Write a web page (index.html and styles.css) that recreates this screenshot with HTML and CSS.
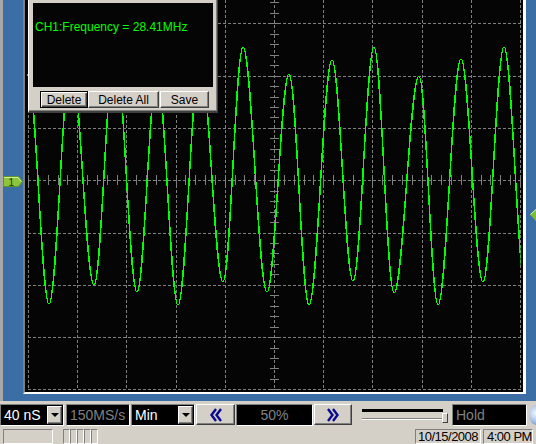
FILE: index.html
```html
<!DOCTYPE html>
<html lang="en">
<head>
  <meta charset="UTF-8">
  <title>Scope - CH1 Frequency</title>
  <link rel="stylesheet" href="styles.css">
</head>
<body>
  <div class="desk">
    <div class="scope">
      <svg class="screen" width="498" height="392" viewBox="25 0 498 392">
        <defs>
          <clipPath id="traceArea"><rect x="27" y="0" width="493.5" height="392"/></clipPath>
        </defs>
        <path id="grid" class="grid"/>
        <path id="ticks" class="ticks"/>
        <path id="wave" class="wave" clip-path="url(#traceArea)"/>
      </svg>
    </div>

    <!-- channel 1 level marker -->
    <svg class="chMarker" width="20" height="11" viewBox="0 0 20 11">
      <polygon points="0.5,0.5 15.5,0.5 19.5,5.5 15.5,10.5 0.5,10.5" fill="#8cc43c" stroke="#5f9424"/>
      <polyline points="1.5,1.5 15,1.5 18.3,5.5" fill="none" stroke="#d2f0a4"/>
      <text x="5.5" y="9.5" class="chLabel">1</text>
    </svg>

    <!-- trigger level marker -->
    <svg class="trigMarker" width="6" height="12" viewBox="0 0 6 12">
      <polygon points="0,5.5 6,0 6,12" fill="#7cbc30"/>
      <polyline points="0.5,5.5 6,0.5" fill="none" stroke="#d8f4a8"/>
    </svg>

    <!-- measurement window -->
    <div class="measure">
      <div class="readout">CH1:Frequency = 28.41MHz</div>
      <div class="measureButtons">
        <button class="winBtn focused btnDelete">Delete</button>
        <button class="winBtn btnDeleteAll">Delete All</button>
        <button class="winBtn btnSave">Save</button>
      </div>
    </div>
  </div>

  <div class="toolbar">
    <div class="field combo timebase">40 nS<span class="drop"></span></div>
    <div class="field rate">150MS/s</div>
    <div class="field combo mode">Min<span class="drop"></span></div>
    <div class="tbBtn">
      <svg width="12" height="14" viewBox="0 0 12 14"><path d="M6 1L1.5 7L6 13M11 1L6.5 7L11 13" class="chevron"/></svg>
    </div>
    <div class="field pos">50%</div>
    <div class="tbBtn next">
      <svg width="12" height="14" viewBox="0 0 12 14"><path d="M1 1L5.5 7L1 13M6 1L10.5 7L6 13" class="chevron"/></svg>
    </div>
    <div class="slider">
      <div class="range"></div>
      <div class="track"><span class="thumb"></span></div>
    </div>
    <div class="field hold">Hold</div>
    <div class="orb"></div>
  </div>

  <div class="statusbar">
    <div class="pane wide"></div>
    <div class="pane tiny first"></div>
    <div class="pane tiny"></div>
    <div class="pane tiny"></div>
    <div class="pane tiny"></div>
    <div class="pane tiny"></div>
    <div class="spacer"></div>
    <div class="pane date">10/15/2008</div>
    <div class="pane time">4:00 PM</div>
  </div>

  <script>
    // graticule: 10 x 8 divisions, top row is scrolled off the window
    const grid = [];
    for (let i = 0; i <= 10; i++) {
      const x = Math.round(28 + 49.2 * i) + 0.5;
      grid.push(`M${x} 0V390`);
    }
    for (let j = 0; j <= 7; j++) {
      const y = Math.round(23.3 + 52.3 * j) + 0.5;
      grid.push(`M28 ${y}H521`);
    }
    document.getElementById('grid').setAttribute('d', grid.join(''));

    // minor ticks on the centre axes
    const ticks = [];
    for (let k = -18; k <= 21; k++) {
      const y = Math.round(180.2 + 10.46 * k) + 0.5;
      if (y > 0 && y < 390) ticks.push(`M270 ${y}H279`);
    }
    for (let k = 0; k <= 50; k++) {
      const x = Math.round(28 + 9.84 * k) + 0.5;
      ticks.push(`M${x} 175V185`);
    }
    document.getElementById('ticks').setAttribute('d', ticks.join(''));

    // peaks and troughs of the captured trace
    const pts = [
      [6, 292], [28, 75], [49, 304], [71, 60], [94, 285], [115, 47], [137, 292], [157, 75],
      [178, 305], [200, 60], [223, 282], [243, 47], [267, 292], [289, 74], [309, 305], [332, 60],
      [353, 281], [374, 47], [394, 293], [419, 76], [438, 305], [461, 59], [483, 282], [504, 47], [526, 292]
    ];
    const k = 0.3642;
    let d = `M${pts[0][0]} ${pts[0][1]}`;
    for (let i = 1; i < pts.length; i++) {
      const [x0, y0] = pts[i - 1];
      const [x1, y1] = pts[i];
      const dx = (x1 - x0) * k;
      d += `C${(x0 + dx).toFixed(1)} ${y0} ${(x1 - dx).toFixed(1)} ${y1} ${x1} ${y1}`;
    }
    document.getElementById('wave').setAttribute('d', d);
  </script>
</body>
</html>
```

FILE: styles.css
```css
body {
  margin: 0;
  width: 536px;
  height: 444px;
  overflow: hidden;
  background: #d4d0c8;
  font-family: "Liberation Sans", Arial, sans-serif;
}

/* blue client area holding the scope screen */
.desk {
  position: relative;
  display: flex;
  height: 401px;
  background: #3a6ea5;
  border-left: 3px solid #a8a8a8;
  box-sizing: border-box;
}

.scope {
  margin-left: 20px;
  width: 498px;
  height: 392px;
  background: #050505;
  border-left: 2px solid #808080;
  border-right: 3px solid #fff;
  border-bottom: 2px solid #fff;
}

.screen {
  display: block;
}

.grid {
  fill: none;
  stroke: #808080;
  stroke-dasharray: 3 2;
  shape-rendering: crispEdges;
}

.ticks {
  fill: none;
  stroke: #808080;
  shape-rendering: crispEdges;
}

.wave {
  fill: none;
  stroke: #00ff00;
  stroke-width: 1.5;
  shape-rendering: crispEdges;
}

.chMarker {
  position: absolute;
  left: 0;
  top: 176px;
}

.chLabel {
  font-family: "Liberation Sans", Arial, sans-serif;
  font-size: 10px;
  fill: #1c3300;
}

.trigMarker {
  position: absolute;
  left: 527px;
  top: 209px;
}

/* measurement popup */
.measure {
  position: absolute;
  left: 25px;
  top: 0;
  width: 180px;
  padding: 3px 4px;
  background: #d4d0c8;
  border-left: 1px solid #fff;
  border-right: 1px solid #404040;
  border-bottom: 2px solid #404040;
  box-shadow: inset -1px -1px #808080;
}

.readout {
  height: 84px;
  box-sizing: border-box;
  padding: 17px 0 0 2px;
  background: #050505;
  color: #00ff00;
  font-size: 12px;
  line-height: 14px;
}

.measureButtons {
  display: flex;
  margin-top: 4px;
  padding-left: 7px;
}

.winBtn {
  height: 17px;
  padding: 0;
  font-family: "Liberation Sans", Arial, sans-serif;
  font-size: 12px;
  color: #000;
  background: #d4d0c8;
  border: 1px solid;
  border-color: #fff #404040 #404040 #fff;
  box-shadow: inset -1px -1px #808080;
}

.winBtn.focused {
  border-color: #000;
  box-shadow: inset 1px 1px #fff, inset -1px -1px #404040, inset -2px -2px #808080;
}

.btnDelete { width: 48px; }
.btnDeleteAll { width: 71px; }
.btnSave { width: 49px; margin-left: 1px; }

/* bottom control strip */
.toolbar {
  display: flex;
  height: 26px;
  padding-top: 3px;
  box-sizing: border-box;
  overflow: hidden;
}

.toolbar > * {
  flex-shrink: 0;
}

.field {
  width: 64px;
  height: 22px;
  box-sizing: border-box;
  padding-left: 3px;
  background: #000;
  border: 1px solid;
  border-color: #808080 #fff #fff #808080;
  color: #808080;
  font-size: 14px;
  line-height: 20px;
  white-space: nowrap;
}

.combo {
  display: flex;
  justify-content: space-between;
  color: #fff;
}

.drop {
  display: flex;
  align-items: center;
  justify-content: center;
  width: 15px;
  height: 18px;
  margin: 1px 1px 0 0;
  box-sizing: border-box;
  background: #d4d0c8;
  border: 1px solid;
  border-color: #fff #404040 #404040 #fff;
  box-shadow: inset -1px -1px #808080;
}

.drop::after {
  content: "";
  border-style: solid;
  border-width: 4px 4px 0;
  border-color: #000 transparent transparent;
}

.timebase { margin-right: 2px; }
.rate { margin-right: 1px; }
.mode { margin-right: 1px; }

.tbBtn {
  display: flex;
  align-items: center;
  justify-content: center;
  width: 39px;
  height: 21px;
  margin-right: 1px;
  box-sizing: border-box;
  background: #d4d0c8;
  border: 1px solid;
  border-color: #fff #404040 #404040 #fff;
  box-shadow: inset -1px -1px #808080;
}

.tbBtn.next {
  width: 38px;
  margin-right: 4px;
}

.chevron {
  fill: none;
  stroke: #0a0a90;
  stroke-width: 2.4;
}

.pos {
  width: 77px;
  margin-right: 1px;
  padding-left: 0;
  text-align: center;
}

.slider {
  width: 92px;
  margin-right: 4px;
  padding: 5px 0 0 6px;
  box-sizing: border-box;
}

.range {
  width: 81px;
  height: 3px;
  background: #000;
}

.track {
  position: relative;
  width: 80px;
  height: 0;
  margin-top: 6px;
  border-top: 1px solid #808080;
  border-bottom: 1px solid #fff;
}

.thumb {
  position: absolute;
  right: -6px;
  top: -6px;
  width: 6px;
  height: 10px;
  box-sizing: border-box;
  background: #d4d0c8;
  border: 1px solid;
  border-color: #fff #404040 #404040 #fff;
}

.hold {
  width: 75px;
  margin-right: 2px;
}

.orb {
  width: 14px;
  height: 20px;
  margin-top: 1px;
  border-radius: 50%;
  background: radial-gradient(circle at 50% 40%, #f4f8ff, #a9c2e6 60%, #6d8fc4);
}

/* status bar */
.statusbar {
  display: flex;
  height: 17px;
  padding-top: 2px;
  box-sizing: border-box;
  font-size: 13px;
  letter-spacing: -0.5px;
}

.pane {
  height: 15px;
  box-sizing: border-box;
  border: 1px solid;
  border-color: #808080 #fff #fff #808080;
  line-height: 13px;
  white-space: nowrap;
}

.pane.wide {
  width: 50px;
  margin-left: 3px;
}

.pane.tiny {
  width: 7px;
}

.pane.tiny.first {
  margin-left: 10px;
}

.spacer {
  flex: 1;
}

.pane.date {
  width: 66px;
  padding-left: 2px;
}

.pane.time {
  width: 50px;
  margin: 0 3px 0 2px;
  padding-left: 3px;
}
```
